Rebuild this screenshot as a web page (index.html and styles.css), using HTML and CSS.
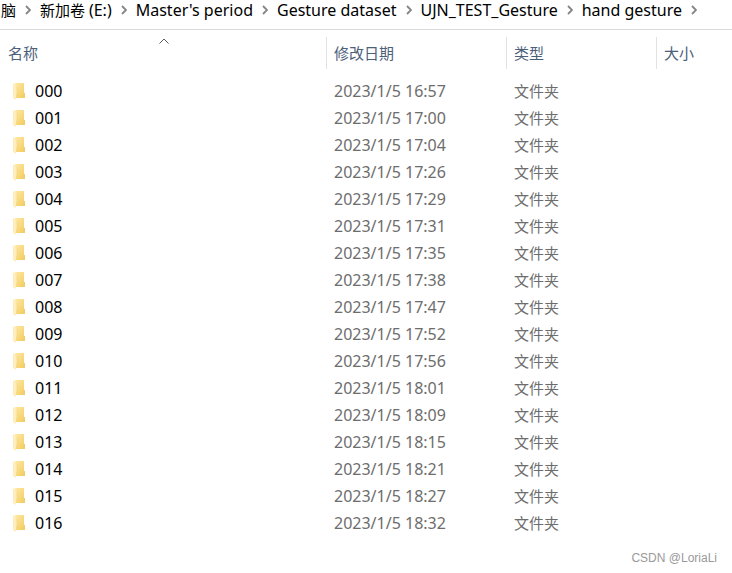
FILE: index.html
```html
<!DOCTYPE html>
<html lang="zh-CN">
<head>
<meta charset="utf-8">
<title>hand gesture</title>
<link rel="stylesheet" href="styles.css">
</head>
<body>
<svg width="0" height="0" class="defs" aria-hidden="true">
  <defs>
    <linearGradient id="back" x1="0" y1="0" x2="1" y2="1">
      <stop offset="0" stop-color="#ffe9a6"/>
      <stop offset="1" stop-color="#f3cb5c"/>
    </linearGradient>
    <symbol id="folder" viewBox="0 0 14 18">
      <path d="M2 1h9v10h1v5H2z" fill="url(#back)"/>
      <path d="M11 11h1v5h-2z" fill="#f0cd6c"/>
      <path d="M0 1l4 3v8l-1 1v5L0 16z" fill="#ffeebb"/>
      <path d="M4 4v8l-1 1" fill="none" stroke="#f2d277" stroke-width="0.6"/>
    </symbol>
    <symbol id="chevron" viewBox="0 0 6 10">
      <path d="M1 1l4 4-4 4" fill="none" stroke="#858585" stroke-width="1.8"/>
    </symbol>
  </defs>
</svg>
<nav class="path">
  <a href="#">脑</a>
  <svg class="chevron"><use href="#chevron"/></svg>
  <a href="#">新加卷 <span class="latin">(E:)</span></a>
  <svg class="chevron"><use href="#chevron"/></svg>
  <a href="#" class="latin">Master's period</a>
  <svg class="chevron"><use href="#chevron"/></svg>
  <a href="#" class="latin">Gesture dataset</a>
  <svg class="chevron"><use href="#chevron"/></svg>
  <a href="#" class="latin">UJN_TEST_Gesture</a>
  <svg class="chevron"><use href="#chevron"/></svg>
  <a href="#" class="latin">hand gesture</a>
  <svg class="chevron"><use href="#chevron"/></svg>
</nav>
<main>
  <table class="files">
    <colgroup><col class="col-name"><col class="col-date"><col class="col-type"><col></colgroup>
    <thead>
      <tr>
        <th><button type="button">名称</button><svg class="sort" viewBox="0 0 10 6"><path d="M0.500 5.500l4.500-4.500 4.500 4.500" fill="none" stroke="#5b5b5b"/></svg></th>
        <th><button type="button">修改日期</button></th>
        <th><button type="button">类型</button></th>
        <th><button type="button">大小</button></th>
      </tr>
    </thead>
    <tbody>
      <tr><td class="name"><svg class="folder"><use href="#folder"/></svg>000</td><td class="date">2023/1/5 16:57</td><td>文件夹</td><td></td></tr>
      <tr><td class="name"><svg class="folder"><use href="#folder"/></svg>001</td><td class="date">2023/1/5 17:00</td><td>文件夹</td><td></td></tr>
      <tr><td class="name"><svg class="folder"><use href="#folder"/></svg>002</td><td class="date">2023/1/5 17:04</td><td>文件夹</td><td></td></tr>
      <tr><td class="name"><svg class="folder"><use href="#folder"/></svg>003</td><td class="date">2023/1/5 17:26</td><td>文件夹</td><td></td></tr>
      <tr><td class="name"><svg class="folder"><use href="#folder"/></svg>004</td><td class="date">2023/1/5 17:29</td><td>文件夹</td><td></td></tr>
      <tr><td class="name"><svg class="folder"><use href="#folder"/></svg>005</td><td class="date">2023/1/5 17:31</td><td>文件夹</td><td></td></tr>
      <tr><td class="name"><svg class="folder"><use href="#folder"/></svg>006</td><td class="date">2023/1/5 17:35</td><td>文件夹</td><td></td></tr>
      <tr><td class="name"><svg class="folder"><use href="#folder"/></svg>007</td><td class="date">2023/1/5 17:38</td><td>文件夹</td><td></td></tr>
      <tr><td class="name"><svg class="folder"><use href="#folder"/></svg>008</td><td class="date">2023/1/5 17:47</td><td>文件夹</td><td></td></tr>
      <tr><td class="name"><svg class="folder"><use href="#folder"/></svg>009</td><td class="date">2023/1/5 17:52</td><td>文件夹</td><td></td></tr>
      <tr><td class="name"><svg class="folder"><use href="#folder"/></svg>010</td><td class="date">2023/1/5 17:56</td><td>文件夹</td><td></td></tr>
      <tr><td class="name"><svg class="folder"><use href="#folder"/></svg>011</td><td class="date">2023/1/5 18:01</td><td>文件夹</td><td></td></tr>
      <tr><td class="name"><svg class="folder"><use href="#folder"/></svg>012</td><td class="date">2023/1/5 18:09</td><td>文件夹</td><td></td></tr>
      <tr><td class="name"><svg class="folder"><use href="#folder"/></svg>013</td><td class="date">2023/1/5 18:15</td><td>文件夹</td><td></td></tr>
      <tr><td class="name"><svg class="folder"><use href="#folder"/></svg>014</td><td class="date">2023/1/5 18:21</td><td>文件夹</td><td></td></tr>
      <tr><td class="name"><svg class="folder"><use href="#folder"/></svg>015</td><td class="date">2023/1/5 18:27</td><td>文件夹</td><td></td></tr>
      <tr><td class="name"><svg class="folder"><use href="#folder"/></svg>016</td><td class="date">2023/1/5 18:32</td><td>文件夹</td><td></td></tr>
    </tbody>
  </table>
</main>
<footer>CSDN @LoriaLi</footer>
</body>
</html>
```
FILE: styles.css
```css
* {
  box-sizing: border-box;
}

body {
  margin: 0;
  background: #fff;
  color: #000;
  font: 15px/20px "Noto Sans", "Noto Sans CJK SC", sans-serif;
}

.defs {
  position: absolute;
}

.path {
  display: flex;
  align-items: center;
  gap: 9px;
  height: 30px;
  padding: 0 0 9px 1px;
  border-bottom: 1px solid #d9d9d9;
  overflow: hidden;
  white-space: nowrap;
}

.path a {
  color: #000;
  text-decoration: none;
}

.latin {
  font-size: 16px;
}

.chevron {
  flex: none;
  width: 6px;
  height: 10px;
}

.files {
  width: 100%;
  table-layout: fixed;
  border-collapse: collapse;
}

.col-name {
  width: 327px;
}

.col-date {
  width: 180px;
}

.col-type {
  width: 150px;
}

th {
  position: relative;
  height: 48px;
  padding: 7px 0 9px;
}

th button {
  display: block;
  width: 100%;
  height: 32px;
  padding: 0 7px;
  border: 0;
  border-right: 1px solid #e2e2e2;
  background: none;
  color: #4c607a;
  font: inherit;
  font-weight: 400;
  text-align: left;
}

th:first-child button {
  padding-left: 8px;
}

th:last-child button {
  border-right: 0;
}

.sort {
  position: absolute;
  top: 8px;
  left: 50%;
  width: 10px;
  height: 6px;
  margin-left: -5px;
}

td {
  height: 27px;
  padding: 0 7px 2px;
  color: #6d6d6d;
}

td.name {
  padding-left: 13px;
  color: #000;
  font-size: 16px;
}

td.date {
  font-size: 16px;
}

.folder {
  width: 14px;
  height: 18px;
  margin-right: 8px;
  vertical-align: -3px;
}

footer {
  padding: 11px 15px 0;
  color: #999;
  font: 12px/20px "Liberation Sans", sans-serif;
  text-align: right;
}
```
